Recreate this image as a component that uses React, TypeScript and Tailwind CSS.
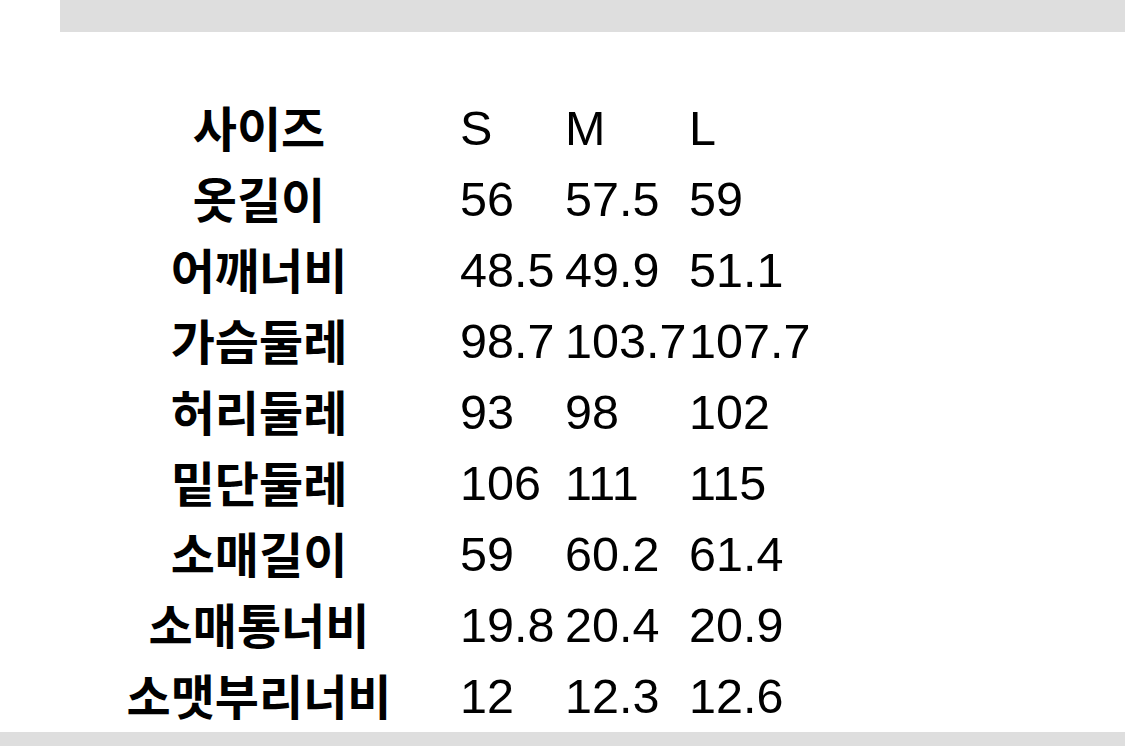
const rows: [string, string, string, string][] = [
  ['사이즈', 'S', 'M', 'L'],
  ['옷길이', '56', '57.5', '59'],
  ['어깨너비', '48.5', '49.9', '51.1'],
  ['가슴둘레', '98.7', '103.7', '107.7'],
  ['허리둘레', '93', '98', '102'],
  ['밑단둘레', '106', '111', '115'],
  ['소매길이', '59', '60.2', '61.4'],
  ['소매통너비', '19.8', '20.4', '20.9'],
  ['소맷부리너비', '12', '12.3', '12.6'],
]

export default function App() {
  return (
    <div className="w-[1125px] h-[746px] bg-white flex flex-col overflow-hidden text-black">
      <div className="h-[32px] ml-[60px] bg-[#dedede] shrink-0" />
      <div className="flex-1 pt-[61px] pl-[58px]">
        <div className="grid grid-cols-[402px_105px_124px_auto] justify-start items-start">
          {rows.map(([label, s, m, l]) => (
            <div key={label} className="contents">
              <div
                className="h-[71px] text-center text-[48px] font-bold leading-[67px] whitespace-nowrap"
                style={{ fontFamily: '"Noto Sans CJK KR", sans-serif' }}
              >
                {label}
              </div>
              {[s, m, l].map((v, i) => (
                <div
                  key={i}
                  className="h-[71px] text-[48.5px] leading-[71px] whitespace-nowrap"
                  style={{ fontFamily: '"Liberation Sans", Arial, sans-serif' }}
                >
                  {v}
                </div>
              ))}
            </div>
          ))}
        </div>
      </div>
      <div className="h-[14px] bg-[#dedede] shrink-0" />
    </div>
  )
}
